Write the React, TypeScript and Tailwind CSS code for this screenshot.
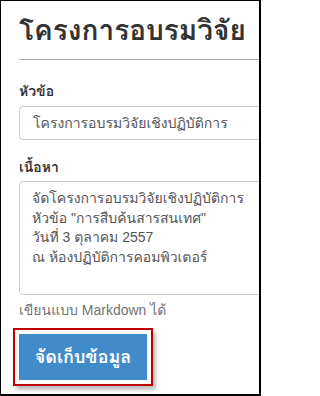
export default function App() {
  const font = { fontFamily: "'Liberation Sans', Loma, Garuda, Kinnari, 'Noto Sans Thai Looped', 'Noto Sans Thai', sans-serif" };

  return (
    <div
      className="w-[261px] h-[396px] overflow-hidden bg-white border-black border-t border-l border-r-2 border-b-2"
      style={font}
    >
      <div className="w-[320px] pl-[18px]">
        <h1 className="pt-[8px] h-[58px] text-[28px] leading-[44px] font-bold text-[#333]">
          โครงการอบรมวิจัย
        </h1>
        <hr className="border-0 border-t border-[#aaa]" />

        <label className="block mt-[22px] mb-[6px] text-[14px] leading-[18px] font-bold text-[#333]">
          หัวข้อ
        </label>
        <div className="h-[34px] border border-[#ccc] rounded-[4px] px-[13px] flex items-center text-[14px] text-[#555]">
          โครงการอบรมวิจัยเชิงปฏิบัติการ
        </div>

        <label className="block mt-[18px] mb-[5px] text-[14px] leading-[18px] font-bold text-[#333]">
          เนื้อหา
        </label>
        <div className="h-[114px] border border-[#ccc] rounded-[4px] px-[12px] pt-[7px] text-[14px] leading-[19.5px] text-[#555]">
          <div>จัดโครงการอบรมวิจัยเชิงปฏิบัติการ</div>
          <div>หัวข้อ "การสืบค้นสารสนเทศ"</div>
          <div>วันที่ 3 ตุลาคม 2557</div>
          <div>ณ ห้องปฏิบัติการคอมพิวเตอร์</div>
        </div>

        <p className="mt-[5px] text-[14px] leading-[20px] text-[#737373]">เขียนแบบ Markdown ได้</p>

        <div className="mt-[8px] -ml-[6px] w-[140px] h-[58px] border-2 border-[#c00000] p-[4px] shadow-[3px_4px_4px_rgba(0,0,0,0.25)]">
          <button className="w-full h-full bg-[#428bca] text-white text-[18px] font-semibold">
            จัดเก็บข้อมูล
          </button>
        </div>
      </div>
    </div>
  );
}
